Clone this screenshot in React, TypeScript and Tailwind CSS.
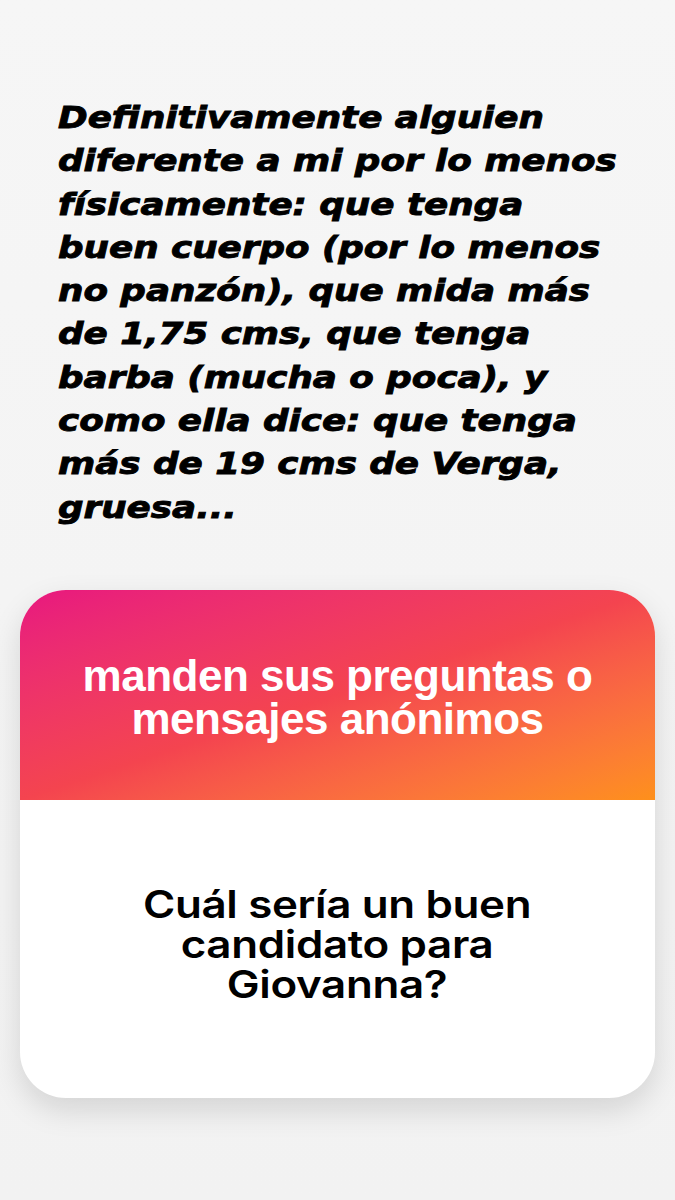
import React from "react";

const topLines = [
  "Definitivamente alguien",
  "diferente a mi por lo menos",
  "físicamente: que tenga",
  "buen cuerpo (por lo menos",
  "no panzón), que mida más",
  "de 1,75 cms, que tenga",
  "barba (mucha o poca), y",
  "como ella dice: que tenga",
  "más de 19 cms de Verga,",
  "gruesa...",
];

export default function App() {
  return (
    <div className="w-[675px] h-[1200px] overflow-hidden bg-linear-to-b from-[#f6f6f6] to-[#f2f2f2] flex flex-col">
      <div className="pt-[96px] pl-[58px]">
        <div
          className="text-black italic font-bold text-[30px] leading-[43.3px] origin-left scale-x-[1.19] [-webkit-text-stroke:0.9px_black]"
          style={{ fontFamily: "'DejaVu Sans', sans-serif" }}
        >
          {topLines.map((l, i) => (
            <div key={i} className="whitespace-nowrap">
              {l}
            </div>
          ))}
        </div>
      </div>
      <div className="mt-[61px] mx-[20px] h-[508px] rounded-[46px] bg-white overflow-hidden shadow-[0_12px_30px_rgba(0,0,0,0.13)] flex flex-col">
        <div
          className="h-[210px] shrink-0 bg-linear-to-br from-[#e8167f] via-[#f4444f] to-[#fe901a] flex items-center justify-center text-center text-white font-bold text-[44px] leading-[43px] tracking-[-0.5px] pt-[4px]"
          style={{ fontFamily: "'Liberation Sans', Arial, sans-serif" }}
        >
          <div>
            manden sus preguntas o
            <br />
            mensajes anónimos
          </div>
        </div>
        <div
          className="flex-1 flex items-center justify-center text-center text-black font-semibold text-[38px] leading-[40px] tracking-[-0.3px] pb-[10px]"
          style={{ fontFamily: "Inter, 'Liberation Sans', sans-serif" }}
        >
          <div className="scale-x-[1.155]">
            Cuál sería un buen
            <br />
            candidato para
            <br />
            Giovanna?
          </div>
        </div>
      </div>
    </div>
  );
}
